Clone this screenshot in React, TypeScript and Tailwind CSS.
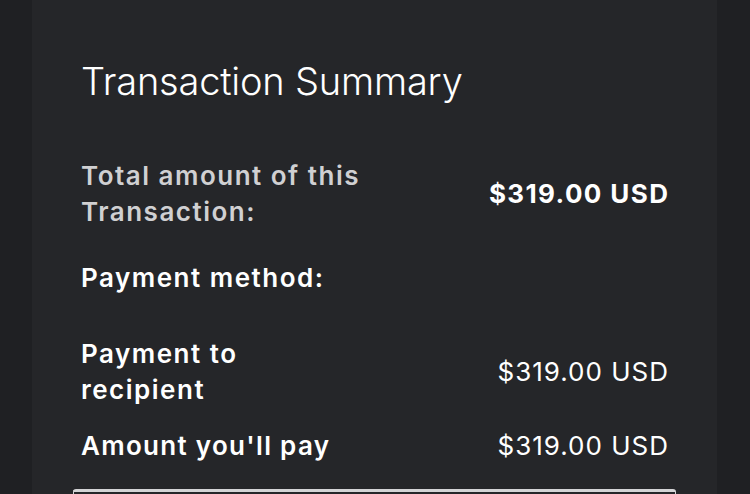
import React from 'react';

const font = { fontFamily: 'Inter, "Noto Sans", sans-serif' };

export default function App() {
  return (
    <div className="w-[750px] h-[494px] bg-[#1f2023] overflow-hidden" style={font}>
      <div className="ml-[32px] w-[685px] h-full bg-[#252629] pt-[58px]">
        <div className="px-[49px]">
          <h1 className="text-[38px] leading-[46px] font-light text-white tracking-[-0.2px]">
            Transaction Summary
          </h1>

          <div className="mt-[54px] flex items-center justify-between">
            <div className="text-[26px] leading-[36px] font-semibold tracking-[1.5px] text-[#d0d0d2] w-[320px]">
              Total amount of this Transaction:
            </div>
            <div className="text-[26px] leading-[36px] font-bold tracking-[1.4px] -mr-[1.4px] text-white">
              $319.00 USD
            </div>
          </div>

          <div className="mt-[30px] text-[26px] leading-[36px] font-semibold tracking-[1.5px] text-white">
            Payment method:
          </div>

          <div className="mt-[40px] flex items-center justify-between">
            <div className="text-[26px] leading-[36px] font-semibold tracking-[1.5px] text-white w-[240px]">
              Payment to recipient
            </div>
            <div className="text-[26px] leading-[36px] font-normal tracking-[1px] -mr-[1px] text-white">
              $319.00 USD
            </div>
          </div>

          <div className="mt-[20px] flex items-center justify-between">
            <div className="text-[26px] leading-[36px] font-semibold tracking-[1.3px] text-white">
              Amount you'll pay
            </div>
            <div className="text-[26px] leading-[36px] font-normal tracking-[1px] -mr-[1px] text-white">
              $319.00 USD
            </div>
          </div>
        </div>

        <div className="mt-[25px] mx-[41px] h-[20px] border-t-[3px] border-x-[1px] border-[#d4d4d6] rounded-t-[3px]" />
      </div>
    </div>
  );
}
